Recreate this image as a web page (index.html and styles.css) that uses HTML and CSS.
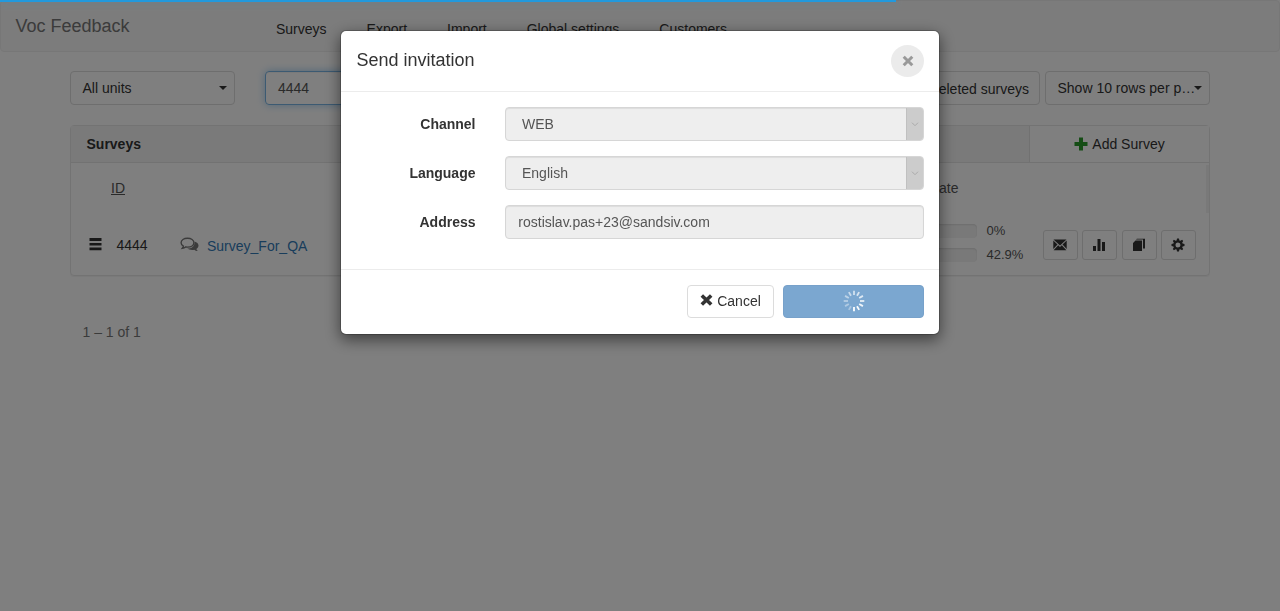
FILE: index.html
```html
<!DOCTYPE html>
<html lang="en">
<head>
<meta charset="utf-8">
<title>Voc Feedback</title>
<link rel="stylesheet" href="styles.css">
</head>
<body>
<nav class="navbar">
  <a class="brand">Voc Feedback</a>
  <div class="nav"><a>Surveys</a><a>Export</a><a>Import</a><a>Global settings</a><a>Customers</a></div>
</nav>
<main class="container">
  <div class="filters">
    <div class="control select">All units<span class="caret"></span></div>
    <div class="control search">4444</div>
    <div class="control deleted">Deleted surveys</div>
    <div class="control select rows">Show 10 rows per p…<span class="caret"></span></div>
  </div>
  <section class="panel">
    <header class="panel-head">
      <b class="panel-title">Surveys</b>
      <a class="add"><svg class="plus" width="14" height="14" viewBox="0 0 14 14"><path d="M5 0.5h4v4.500h4.500v4H9v4.500H5V9H.5V5H5z"/></svg>Add Survey</a>
    </header>
    <div class="thead"><span class="th-id">ID</span><span class="th-rate">Rate</span><i class="strip"></i></div>
    <div class="row">
      <svg class="bars" width="13" height="13" viewBox="0 0 13 13"><path d="M.5 0h12v3H.5zM.5 5h12v2.500H.5zM.5 9.500h12v2.700H.5z"/></svg>
      <span class="id">4444</span>
      <svg class="chat" width="19" height="16" viewBox="0 0 19 16"><path class="chat-back" d="M14.500 4.500C17 5.200 18.500 6.600 18.500 8.500c0 1.500-.8 2.600-2.100 3.400.2.900.8 1.500 1.600 2.200-1.700 0-2.900-.5-3.700-1.300-2.600.5-5.300.1-7.100-1.200C11.500 11.600 15 9.400 14.500 4.500z"/><path class="chat-front" d="M7.500 1.200c3.700 0 6.400 1.900 6.400 4.500s-2.700 4.400-6.400 4.400c-.7 0-1.200 0-1.800-.2-1 .9-2.100 1.300-3.400 1.400.6-.7 1-1.300 1.100-2.200C2 8.400 1.100 7.200 1.100 5.700c0-2.600 2.700-4.500 6.400-4.500z"/></svg>
      <a class="link">Survey_For_QA</a>
      <div class="rates">
        <div class="rate"><i class="progress"></i><span>0%</span></div>
        <div class="rate"><i class="progress"></i><span>42.9%</span></div>
      </div>
      <div class="actions">
        <button><svg width="14" height="12" viewBox="0 0 14 12"><path d="M.5.500h13L7 6.600zM.3 1.600 4.500 5.600.3 10zM13.700 1.600V10L9.500 5.600zM5.200 6.300 7 8l1.800-1.700 4.600 5H.6z"/></svg></button>
        <button><svg width="14" height="14" viewBox="0 0 14 14"><path d="M1 8h3v5H1zM5.500 1h3v12h-3zM10 4h3v9h-3z"/></svg></button>
        <button><svg width="14" height="14" viewBox="0 0 14 14"><path d="M3.500 2.500H10V13H1V5zM4.800.700H13v9.800h-2V1.600H4z"/></svg></button>
        <button><svg width="14" height="14" viewBox="0 0 14 14"><path fill-rule="evenodd" d="M6 .5h2l.4 1.900 1 .4 1.700-1 1.100 1.100-1 1.700.4 1 1.900.4v2l-1.900.4-.4 1 1 1.700-1.100 1.100-1.700-1-1 .4-.4 1.900H6l-.4-1.900-1-.4-1.700 1-1.100-1.100 1-1.700-.4-1L.5 8V6l1.900-.4.4-1-1-1.700 1.100-1.100 1.700 1 1-.4zM7 4.500a2.500 2.500 0 1 0 0 5 2.500 2.500 0 0 0 0-5z"/></svg></button>
      </div>
    </div>
  </section>
  <div class="pager">1 – 1 of 1</div>
</main>
<div class="backdrop">
  <div class="modal">
    <header class="modal-head"><span>Send invitation</span><button class="close"><svg width="12" height="12" viewBox="0 0 12 12"><path d="M1.700 1.700l8.600 8.600M10.300 1.700L1.700 10.300"/></svg></button></header>
    <div class="modal-body">
      <div class="field"><b>Channel</b><div class="input picker">WEB<i class="drop"><svg width="8" height="5" viewBox="0 0 8 5"><path d="M1 .7 4 3.700 7 .7"/></svg></i></div></div>
      <div class="field"><b>Language</b><div class="input picker">English<i class="drop"><svg width="8" height="5" viewBox="0 0 8 5"><path d="M1 .7 4 3.700 7 .7"/></svg></i></div></div>
      <div class="field"><b>Address</b><div class="input">rostislav.pas+23@sandsiv.com</div></div>
    </div>
    <footer class="modal-foot">
      <button class="cancel"><svg width="13" height="12" viewBox="0 0 13 12"><path d="M1.800 1.500l9.400 9M11.200 1.500l-9.400 9"/></svg>Cancel</button>
      <button class="send"><svg width="22" height="22" viewBox="-11 -11 22 22"><path opacity=".65" d="M0-6V-10.300"/><path opacity=".7" d="M0-6V-10.300" transform="rotate(30)"/><path opacity=".75" d="M0-6V-10.300" transform="rotate(60)"/><path opacity=".8" d="M0-6V-10.300" transform="rotate(90)"/><path opacity=".88" d="M0-6V-10.300" transform="rotate(120)"/><path opacity=".95" d="M0-6V-10.300" transform="rotate(150)"/><path d="M0-6V-10.300" transform="rotate(180)"/><path opacity=".35" d="M0-6V-10.300" transform="rotate(210)"/><path opacity=".4" d="M0-6V-10.300" transform="rotate(240)"/><path opacity=".45" d="M0-6V-10.300" transform="rotate(270)"/><path opacity=".5" d="M0-6V-10.300" transform="rotate(300)"/><path opacity=".6" d="M0-6V-10.300" transform="rotate(330)"/></svg></button>
    </footer>
  </div>
</div>
<div class="loading"></div>
</body>
</html>
```
FILE: styles.css
```css
* { box-sizing: border-box; }
body { margin: 0; height: 611px; overflow: hidden; background: #fff; color: #333; font: 14px/20px "Liberation Sans", Arial, sans-serif; }
button { font: inherit; color: #333; padding: 0; display: flex; align-items: center; justify-content: center; background: #fff; border: 1px solid #dcdcdc; border-radius: 4px; }
svg { flex: none; display: block; fill: currentColor; }

.navbar { display: flex; height: 52px; background: #f8f8f8; border: 1px solid #efefef; border-radius: 4px; padding-left: 14.500px; }
.brand { width: 260.500px; padding-top: 15px; font-size: 18px; color: #777; }
.nav { display: flex; gap: 40px; padding-top: 18px; color: #333; }

.container { width: 1140px; margin: 19px auto 0; }
.filters { display: flex; }
.control { height: 34px; border: 1px solid #dcdcdc; border-radius: 4px; padding: 6px 12px; white-space: nowrap; }
.select { width: 165px; display: flex; align-items: center; justify-content: space-between; padding-right: 7px; padding-left: 11.500px; }
.caret { border: 4px solid transparent; border-top-color: #333; border-bottom: 0; }
.rows .caret { margin-left: -2px; }
.search { width: 360px; margin-left: 30px; color: #555; border-color: #78b4e4; box-shadow: inset 0 1px 1px rgba(0,0,0,.05), 0 0 8px rgba(102,175,233,.6); }
.deleted { margin-left: auto; padding: 7px 10px 5px 30px; }
.rows { margin-left: 5px; }

.panel { margin-top: 20px; height: 151px; border: 1px solid #e6e6e6; border-radius: 4px; box-shadow: 0 1px 1px rgba(0,0,0,.05); }
.panel-head { display: flex; height: 37px; background: #f5f5f5; border-bottom: 1px solid #e4e4e4; }
.panel-title { flex: 1; padding: 8px 15.500px; }
.add { width: 180px; display: flex; align-items: center; justify-content: center; border-left: 1px solid #e2e2e2; background: #fff; }
.plus { fill: #2a9b2a; margin-right: 4px; }
.thead { display: flex; justify-content: space-between; height: 50px; padding: 15px 0 0 40px; color: #555; }
.th-id { text-decoration: underline; width: 300px; }
.th-rate { margin-left: auto; margin-right: 247.500px; }
.strip { width: 3px; height: 48px; margin-top: -13px; background: #f3f3f3; }
.row { display: flex; align-items: center; height: 64px; padding: 0 13px 0 18px; }
.bars { margin-top: -1px; }
.id { width: 63.500px; margin-left: 14.500px; }
.chat { color: #777; margin-right: 8px; }
.chat-front { fill: #fff; stroke: #777; stroke-width: 1.400; }
.link { color: #337ab7; margin-top: 2px; }
.rates { margin-left: auto; margin-top: -4px; color: #555; font-size: 13px; margin-right: 16px; }
.rate { display: flex; align-items: center; height: 24px; gap: 9.500px; }
.rate span { width: 40.500px; }
.progress { width: 100px; height: 14px; background: #f3f3f3; border-radius: 4px; box-shadow: inset 0 1px 2px rgba(0,0,0,.1); }
.actions { display: flex; gap: 4.330px; }
.actions button { width: 35px; height: 30px; border-radius: 3px; padding-right: 1px; padding-bottom: 1px; }
.pager { margin: 46px 0 0 12.500px; color: #777; }

.backdrop { position: fixed; inset: 0; background: rgba(0,0,0,.5); padding-top: 30px; }
.modal { width: 600px; height: 305px; margin: 0 auto; background: #fff; background-clip: padding-box; border: 1px solid rgba(0,0,0,.2); border-radius: 6px; box-shadow: 0 5px 15px rgba(0,0,0,.5); }
.modal-head { display: flex; justify-content: space-between; align-items: center; height: 61px; padding: 0 15px 2px 15.500px; border-bottom: 1px solid #ececec; font-size: 18px; }
.close { width: 33px; height: 32px; margin-top: 1px; border: 0; border-radius: 50%; background: #ebebeb; }
.close svg { fill: none; stroke: #999; stroke-width: 3; }
.modal-body { height: 177px; padding: 15px 15px 0; display: flex; flex-direction: column; gap: 15px; }
.field { display: flex; align-items: center; }
.field b { width: 119.500px; text-align: right; margin-right: 29.500px; }
.input { flex: 1; height: 34px; display: flex; align-items: center; padding-left: 12.300px; color: #555; background: #eee; border: 1px solid #d6d6d6; border-radius: 4px; box-shadow: inset 0 1px 1px rgba(0,0,0,.075); }
.picker { padding-left: 16px; }
.drop { display: flex; align-items: center; justify-content: center; width: 17px; height: 32px; margin-left: auto; background: #ccc; border-left: 1px solid #c0c0c0; border-radius: 0 3px 3px 0; }
.drop svg { fill: none; stroke: #aaa; }
.modal-foot { display: flex; justify-content: flex-end; gap: 9px; height: 65px; padding: 14.500px 15px 0; border-top: 1px solid #ececec; }
.modal-foot button { height: 33px; }
.cancel { width: 87px; }
.cancel svg { fill: none; stroke: #333; stroke-width: 3.600; margin: -2px 4px 0 0; }
.modal-foot .send { width: 141px; background: #7ba7d0; border-color: #77a1ca; }
.send svg { stroke: #fff; stroke-width: 1.800; }
.loading { position: fixed; top: 0; left: 0; width: 896px; height: 2px; background: #29d; box-shadow: 0 0 8px rgba(34,153,221,.35); }
```
